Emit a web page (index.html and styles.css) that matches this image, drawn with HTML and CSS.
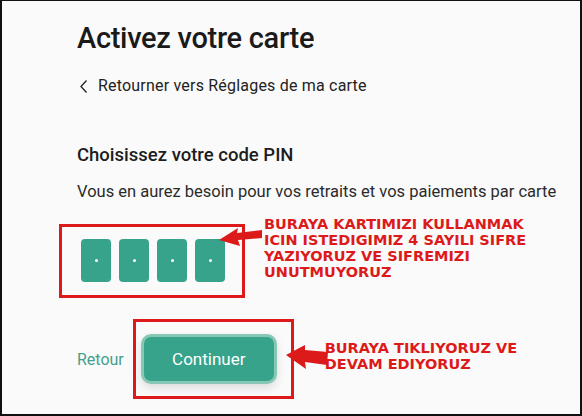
FILE: index.html
```html
<!DOCTYPE html>
<html lang="fr">
<head>
    <meta charset="UTF-8">
    <title>Activez votre carte</title>
    <link rel="stylesheet" href="styles.css">
</head>
<body>

<div class="page">
    <h1 class="title">Activez votre carte</h1>

    <a class="back" href="#">
        <svg class="chevron" width="8" height="13" viewBox="0 0 8 13">
            <polyline points="6.5,0.5 1,6.5 6.5,12.5" fill="none" stroke="#222" stroke-width="1.3"/>
        </svg>
        Retourner vers Réglages de ma carte
    </a>

    <h2 class="subtitle">Choisissez votre code PIN</h2>
    <p class="hint">Vous en aurez besoin pour vos retraits et vos paiements par carte</p>

    <div class="pin-row">
        <div class="mark pin-mark">
            <div class="pin-box"><span class="dot"></span></div>
            <div class="pin-box"><span class="dot"></span></div>
            <div class="pin-box"><span class="dot"></span></div>
            <div class="pin-box"><span class="dot"></span></div>
        </div>
        <p class="note note-pin">
            BURAYA KARTIMIZI KULLANMAK<br>
            ICIN ISTEDIGIMIZ 4 SAYILI SIFRE<br>
            YAZIYORUZ VE SIFREMIZI<br>
            UNUTMUYORUZ
        </p>
        <svg class="arrow arrow-pin" width="44" height="22" viewBox="0 0 44 22">
            <polygon points="0,13 19,1 18,6 43,3 43,11 19,13 21,19" fill="#dd1a1a"/>
        </svg>
    </div>

    <div class="actions">
        <a class="retour" href="#">Retour</a>
        <div class="mark btn-mark">
            <button class="continue">Continuer</button>
        </div>
        <p class="note note-btn">
            BURAYA TIKLIYORUZ VE<br>
            DEVAM EDIYORUZ
        </p>
        <svg class="arrow arrow-btn" width="44" height="26" viewBox="0 0 44 26">
            <polygon points="0,10 19,0 19,5 42,7 41,20 19,17 20,24" fill="#dd1a1a"/>
        </svg>
    </div>
</div>

</body>
</html>
```

FILE: styles.css
```css
html, body {
    margin: 0;
    height: 100%;
}

body {
    font-family: Roboto, "Liberation Sans", sans-serif;
    background-color: #fafafa;
    color: #222;
}

.page {
    box-sizing: border-box;
    height: 416px;
    border: 2px solid #111;
    border-top-width: 1px;
    padding: 19px 0 0 75px;
}

.title {
    margin: 0;
    font-size: 29px;
    line-height: 36px;
    font-weight: 500;
    color: #1a1a1a;
    letter-spacing: -0.3px;
}

.back {
    display: flex;
    align-items: center;
    gap: 10px;
    margin-top: 20px;
    margin-left: 3px;
    font-size: 16px;
    line-height: 20px;
    letter-spacing: 0.2px;
    color: #222;
    text-decoration: none;
}

.subtitle {
    margin: 48px 0 0;
    font-size: 18.5px;
    line-height: 22px;
    font-weight: 500;
    color: #1d1d1d;
}

.hint {
    margin: 16px 0 0;
    font-size: 16.5px;
    line-height: 20px;
    color: #2a2a2a;
}

.pin-row {
    position: relative;
    display: flex;
    align-items: flex-start;
    margin: 22px 0 0 -18px;
}

.mark {
    border: 3px solid #dd1a1a;
}

.pin-mark {
    display: flex;
    gap: 8px;
    padding: 12px 17px 13px 19px;
}

.pin-box {
    width: 30px;
    height: 43px;
    border-radius: 4px;
    background-color: #36a38a;
    display: flex;
    align-items: center;
    justify-content: center;
}

.dot {
    width: 3px;
    height: 3px;
    border-radius: 50%;
    background-color: #fff;
}

.note {
    margin: 0;
    font-family: "DejaVu Sans", Verdana, sans-serif;
    font-weight: bold;
    font-size: 14.5px;
    line-height: 16px;
    color: #dd1a1a;
}

.note-pin {
    margin: -8px 0 0 19px;
}

.arrow {
    position: absolute;
}

.arrow-pin {
    left: 160px;
    top: 3px;
}

.actions {
    position: relative;
    display: flex;
    align-items: flex-start;
    margin: 21px 0 0;
}

.retour {
    margin-top: 31px;
    margin-right: 9px;
    font-size: 16px;
    line-height: 20px;
    color: #44a08b;
    text-decoration: none;
}

.btn-mark {
    padding: 12px 14px 12px 5px;
}

.continue {
    width: 136px;
    height: 50px;
    border: 3px solid #86c7b6;
    border-radius: 10px;
    background-color: #36a38a;
    color: #fff;
    font-family: Roboto, "Liberation Sans", sans-serif;
    font-size: 17px;
    box-shadow: 0 4px 8px rgba(0, 0, 0, 0.12);
}

.note-btn {
    margin: 21px 0 0 31px;
}

.arrow-btn {
    left: 209px;
    top: 26px;
}
```
